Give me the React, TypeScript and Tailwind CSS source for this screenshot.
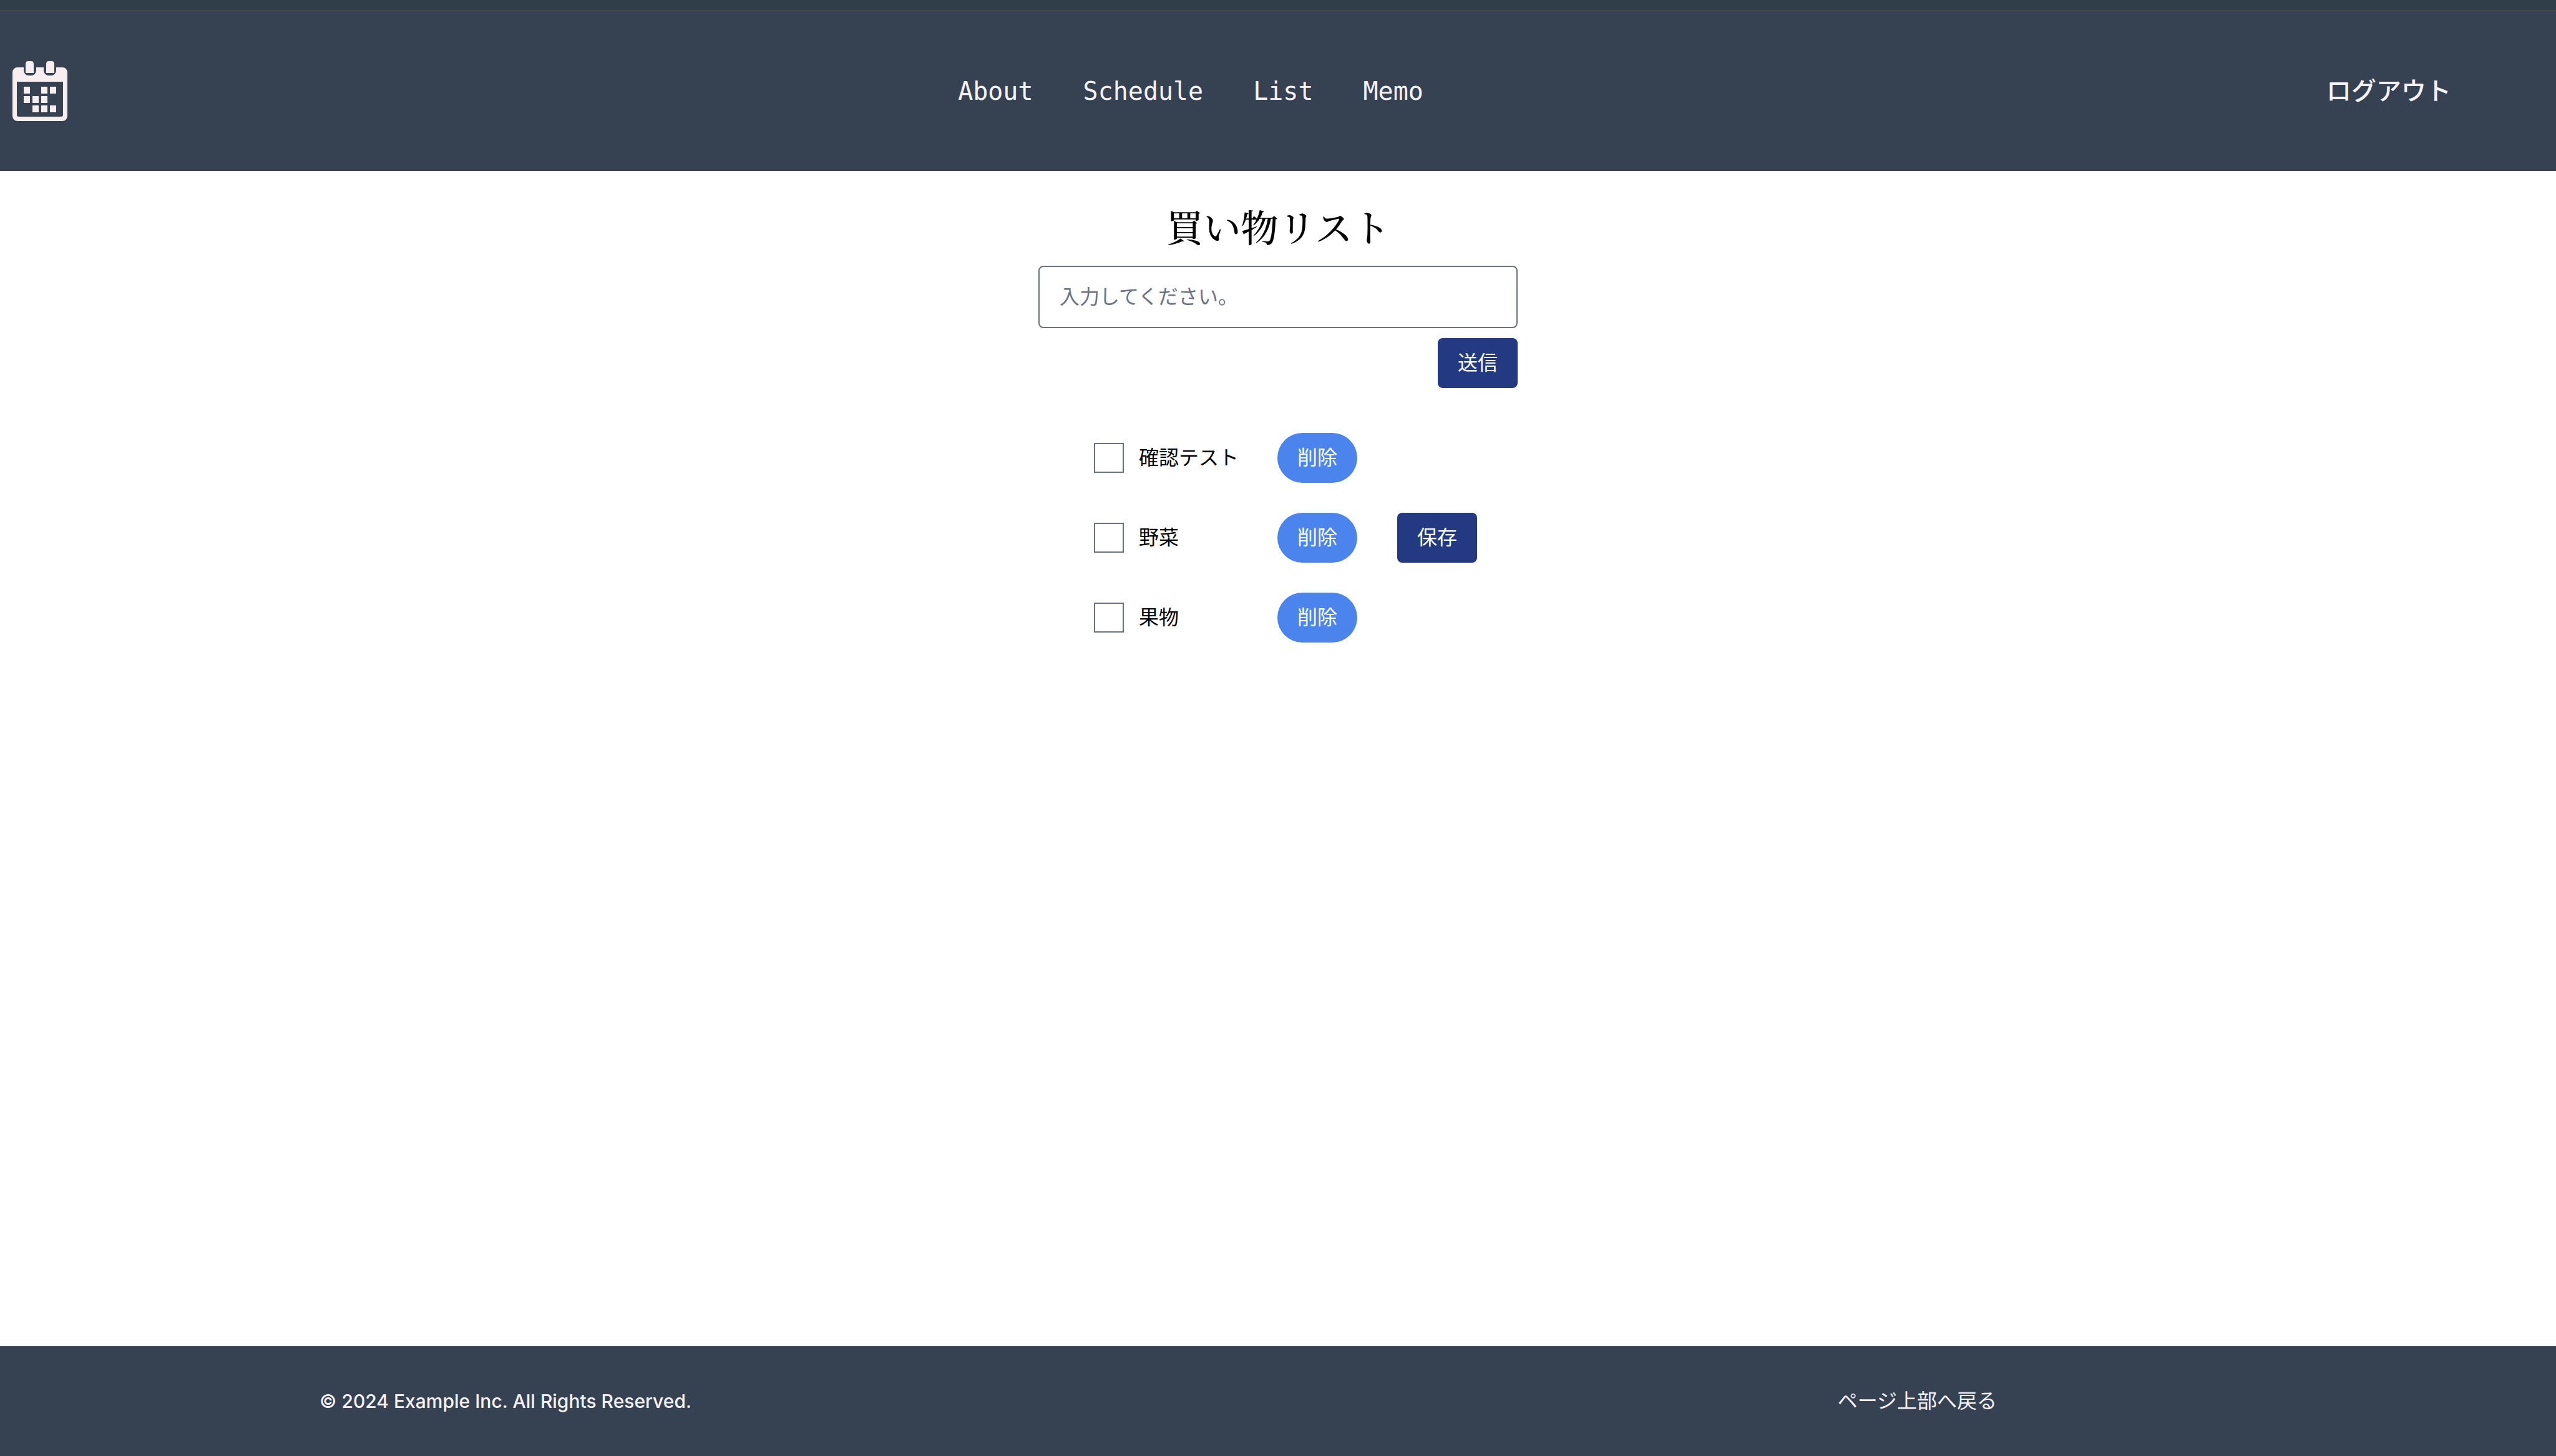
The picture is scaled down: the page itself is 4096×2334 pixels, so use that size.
type Item = { id: string; name: string; saved?: boolean };

const navLinks = ["About", "Schedule", "List", "Memo"];

const items: Item[] = [
  { id: "item-test", name: "確認テスト" },
  { id: "item-vegetable", name: "野菜", saved: true },
  { id: "item-fruit", name: "果物" },
];

const calendarCells = [
  [38, 139], [66, 139], [80, 139],
  [38, 154], [52, 154], [66, 154],
  [52, 169], [66, 169], [80, 169],
];

function CalendarLogo() {
  return (
    <svg viewBox="0 82 128 128" className="size-32" fill="#f7efef" aria-hidden="true">
      <path
        fillRule="evenodd"
        d="M28 108H38V113A8 8 0 0 0 46 121H50A8 8 0 0 0 58 113V108H70V113A8 8 0 0 0 78 121H82A8 8 0 0 0 90 113V108H100A8 8 0 0 1 108 116V186A8 8 0 0 1 100 194H28A8 8 0 0 1 20 186V116A8 8 0 0 1 28 108ZM27 131V184A3 3 0 0 0 30 187H98A3 3 0 0 0 101 184V131Z"
      />
      <path d="M41 103Q41 98 45 98H50Q54 98 54 103V117H41Z" />
      <path d="M74 103Q74 98 78 98H83Q87 98 87 103V117H74Z" />
      {calendarCells.map(([x, y]) => (
        <rect key={`${x}-${y}`} x={x} y={y} width="10" height="11" />
      ))}
    </svg>
  );
}

function Header() {
  return (
    <header className="border-t-2 border-[#444749] bg-[#364152] text-[40px] leading-[56px] text-violet-50">
      <div className="flex h-64 items-center justify-between pr-32">
        <a href="#" aria-label="Home">
          <CalendarLogo />
        </a>
        <nav className="flex gap-20 font-['DejaVu_Sans_Mono',monospace]">
          {navLinks.map((label) => (
            <a key={label} href={`#${label.toLowerCase()}`}>
              {label}
            </a>
          ))}
        </nav>
        <button type="button" className="px-10 font-medium">
          ログアウト
        </button>
      </div>
    </header>
  );
}

function ShoppingList() {
  return (
    <ul className="mx-auto mt-[72px] grid grid-cols-[230px_auto_auto] gap-x-16 gap-y-12 pl-6">
      {items.map((item) => (
        <li key={item.id} className="col-span-3 grid grid-cols-subgrid items-center">
          <label className="flex items-center gap-6 whitespace-nowrap">
            <input
              type="checkbox"
              className="size-12 shrink-0 appearance-none border-2 border-[#6b7280] bg-white checked:bg-[#4c84ee]"
            />
            {item.name}
          </label>
          <button type="button" className="rounded-full bg-[#4c84ee] px-8 py-4 text-white">
            削除
          </button>
          {item.saved ? (
            <button type="button" className="rounded-lg bg-[#233a83] px-8 py-4 text-white">
              保存
            </button>
          ) : null}
        </li>
      ))}
    </ul>
  );
}

export default function App() {
  return (
    <div className="flex min-h-screen flex-col bg-white font-['Inter','Noto_Sans_CJK_JP',sans-serif] text-[32px] leading-[48px] text-black">
      <div className="h-4 bg-[#303e49]" />
      <Header />
      <main className="flex flex-1 flex-col pt-12">
        <h1 className="text-center font-['Noto_Serif_CJK_JP','Noto_Serif_JP','Noto_Sans_CJK_JP',serif] text-[60px] leading-[80px] font-medium">
          買い物リスト
        </h1>
        <form className="mx-auto mt-6 flex w-3xl flex-col items-end gap-4">
          <input
            type="text"
            aria-label="買い物リスト"
            placeholder="入力してください。"
            className="w-full rounded-lg border-2 border-[#6b7280] px-8 py-6 placeholder:text-[#6b7280]"
          />
          <button type="button" className="rounded-lg bg-[#233a83] px-8 py-4 text-white">
            送信
          </button>
        </form>
        <ShoppingList />
      </main>
      <footer className="flex items-center justify-between bg-[#364152] py-16 pr-[21.875%] pl-[12.5%] text-violet-50">
        <small className="text-[30px] leading-[48px] font-medium">© 2024 Example Inc. All Rights Reserved.</small>
        <a href="#">ページ上部へ戻る</a>
      </footer>
    </div>
  );
}
